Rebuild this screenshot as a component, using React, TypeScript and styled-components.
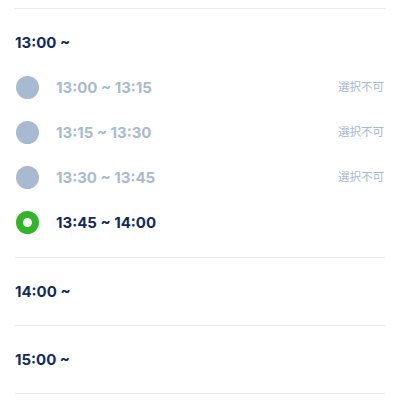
import styled, { createGlobalStyle } from "styled-components";

const GlobalStyle = createGlobalStyle`
  html, body {
    margin: 0;
    padding: 0;
    background: #ffffff;
    overflow: hidden;
  }
  body {
    font-family: "Inter", "Noto Sans CJK JP", sans-serif;
    -webkit-font-smoothing: antialiased;
  }
`;

const Page = styled.div`
  height: 400px;
  padding: 8px 15px 0;
  box-sizing: border-box;
  overflow: hidden;
`;

const Section = styled.section`
  border-top: 1px solid #e8ecf1;

  &:last-child {
    border-bottom: 1px solid #e8ecf1;
  }
`;

const Header = styled.div`
  height: 67px;
  display: flex;
  align-items: center;
  font-size: 15px;
  font-weight: 700;
  color: #0f2b5b;
`;

const SlotList = styled.ul`
  list-style: none;
  margin: 0;
  padding: 0 0 23px;
  display: flex;
  flex-direction: column;
  gap: 22px;
`;

const Slot = styled.li`
  height: 23px;
  display: flex;
  align-items: center;
`;

const Radio = styled.span<{ $state: "disabled" | "checked" }>`
  width: ${(p) => (p.$state === "checked" ? "9px" : "23px")};
  height: ${(p) => (p.$state === "checked" ? "9px" : "23px")};
  border-radius: 50%;
  flex: none;
  margin-left: 1px;
  background: ${(p) => (p.$state === "checked" ? "#ffffff" : "#a7bad2")};
  border: ${(p) => (p.$state === "checked" ? "7px solid #33b52a" : "none")};
`;

const SlotTime = styled.span<{ $disabled: boolean }>`
  margin-left: 17px;
  font-size: 15px;
  font-weight: 700;
  color: ${(p) => (p.$disabled ? "#a7bad2" : "#0f2b5b")};
`;

const Status = styled.span`
  margin-left: auto;
  margin-right: 1px;
  margin-bottom: 4px;
  font-family: "Noto Sans CJK JP", sans-serif;
  font-size: 11.5px;
  color: #a7bad2;
`;

type SlotData = { time: string; available: boolean };

const sections: { label: string; open: boolean; slots: SlotData[] }[] = [
  {
    label: "13:00 ~",
    open: true,
    slots: [
      { time: "13:00 ~ 13:15", available: false },
      { time: "13:15 ~ 13:30", available: false },
      { time: "13:30 ~ 13:45", available: false },
      { time: "13:45 ~ 14:00", available: true },
    ],
  },
  { label: "14:00 ~", open: false, slots: [] },
  { label: "15:00 ~", open: false, slots: [] },
];

export default function App() {
  return (
    <>
      <GlobalStyle />
      <Page>
        {sections.map((section) => (
          <Section key={section.label}>
            <Header>{section.label}</Header>
            {section.open && (
              <SlotList>
                {section.slots.map((slot) => (
                  <Slot key={slot.time}>
                    <Radio $state={slot.available ? "checked" : "disabled"} />
                    <SlotTime $disabled={!slot.available}>{slot.time}</SlotTime>
                    {!slot.available && <Status>選択不可</Status>}
                  </Slot>
                ))}
              </SlotList>
            )}
          </Section>
        ))}
      </Page>
    </>
  );
}
